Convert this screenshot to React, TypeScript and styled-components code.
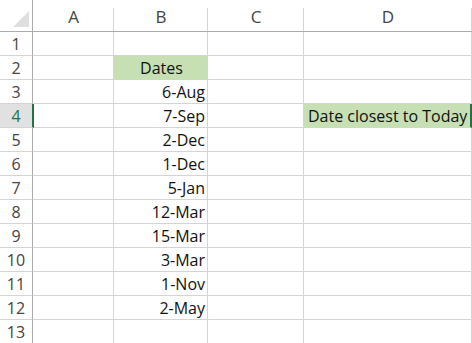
import styled, { createGlobalStyle } from 'styled-components'

const GlobalStyle = createGlobalStyle`
  html, body {
    margin: 0;
    padding: 0;
    background: #ffffff;
  }
  body {
    font-family: 'Open Sans', 'Noto Sans', 'Liberation Sans', sans-serif;
  }
`

const Sheet = styled.div`
  display: grid;
  grid-template-columns: 33px 81px 94px 96px 168px;
  grid-template-rows: 32px repeat(13, 24px);
  width: 472px;
  height: 343px;
  overflow: hidden;
  background: #ffffff;
`

const Corner = styled.div`
  border-right: 1px solid #ababab;
  border-bottom: 1px solid #ababab;
  display: flex;
  justify-content: flex-end;
  align-items: flex-end;
  padding: 0 3px 4px 0;
  box-sizing: border-box;
`

const Triangle = styled.div`
  width: 0;
  height: 0;
  border-left: 16px solid transparent;
  border-bottom: 16px solid #dfdfdf;
`

const ColHeader = styled.div`
  border-bottom: 1px solid #ababab;
  background-image: linear-gradient(#d4d4d4, #d4d4d4);
  background-repeat: no-repeat;
  background-position: right bottom;
  background-size: 1px calc(100% - 8px);
  display: flex;
  align-items: center;
  justify-content: center;
  padding-top: 2px;
  box-sizing: border-box;
  font-size: 17px;
  color: #444444;
`

const RowHeader = styled.div<{ $active?: boolean }>`
  border-bottom: 1px solid #d4d4d4;
  border-right: ${(p) => (p.$active ? '2px solid #217346' : '1px solid #ababab')};
  margin-right: ${(p) => (p.$active ? '-1px' : '0')};
  background: ${(p) => (p.$active ? '#e1e1e1' : '#ffffff')};
  color: ${(p) => (p.$active ? '#217346' : '#444444')};
  display: flex;
  align-items: center;
  justify-content: center;
  box-sizing: border-box;
  font-size: 16px;
  position: relative;
  z-index: 1;
`

const Cell = styled.div<{ $fill?: boolean; $align?: 'left' | 'right' | 'center'; $active?: boolean }>`
  border-right: ${(p) => (p.$active ? '2px solid #217346' : '1px solid #d4d4d4')};
  border-bottom: 1px solid ${(p) => (p.$fill ? '#c6e0b4' : '#d4d4d4')};
  background: ${(p) => (p.$fill ? '#c6e0b4' : 'transparent')};
  display: flex;
  align-items: flex-end;
  justify-content: ${(p) =>
    p.$align === 'right' ? 'flex-end' : p.$align === 'center' ? 'center' : 'flex-start'};
  padding: 0 2px 0 4px;
  box-sizing: border-box;
  font-size: 16px;
  line-height: 21px;
  color: #111111;
  white-space: nowrap;
  overflow: hidden;
`

const dates = ['6-Aug', '7-Sep', '2-Dec', '1-Dec', '5-Jan', '12-Mar', '15-Mar', '3-Mar', '1-Nov', '2-May']

const cellB = (row: number) => {
  if (row === 2) return { text: 'Dates', fill: true, align: 'center' as const }
  if (row >= 3 && row <= 12) return { text: dates[row - 3], fill: false, align: 'right' as const }
  return { text: '', fill: false, align: 'left' as const }
}

const App = () => {
  const rows = Array.from({ length: 13 }, (_, i) => i + 1)
  return (
    <>
      <GlobalStyle />
      <Sheet>
        <Corner>
          <Triangle />
        </Corner>
        <ColHeader>A</ColHeader>
        <ColHeader>B</ColHeader>
        <ColHeader>C</ColHeader>
        <ColHeader>D</ColHeader>
        {rows.map((r) => {
          const b = cellB(r)
          return [
            <RowHeader key={`h${r}`} $active={r === 4}>
              {r}
            </RowHeader>,
            <Cell key={`a${r}`} />,
            <Cell key={`b${r}`} $fill={b.fill} $align={b.align}>
              {b.text}
            </Cell>,
            <Cell key={`c${r}`} />,
            <Cell key={`d${r}`} $fill={r === 4} $active={r === 4}>
              {r === 4 ? 'Date closest to Today' : ''}
            </Cell>,
          ]
        })}
      </Sheet>
    </>
  )
}

export default App
